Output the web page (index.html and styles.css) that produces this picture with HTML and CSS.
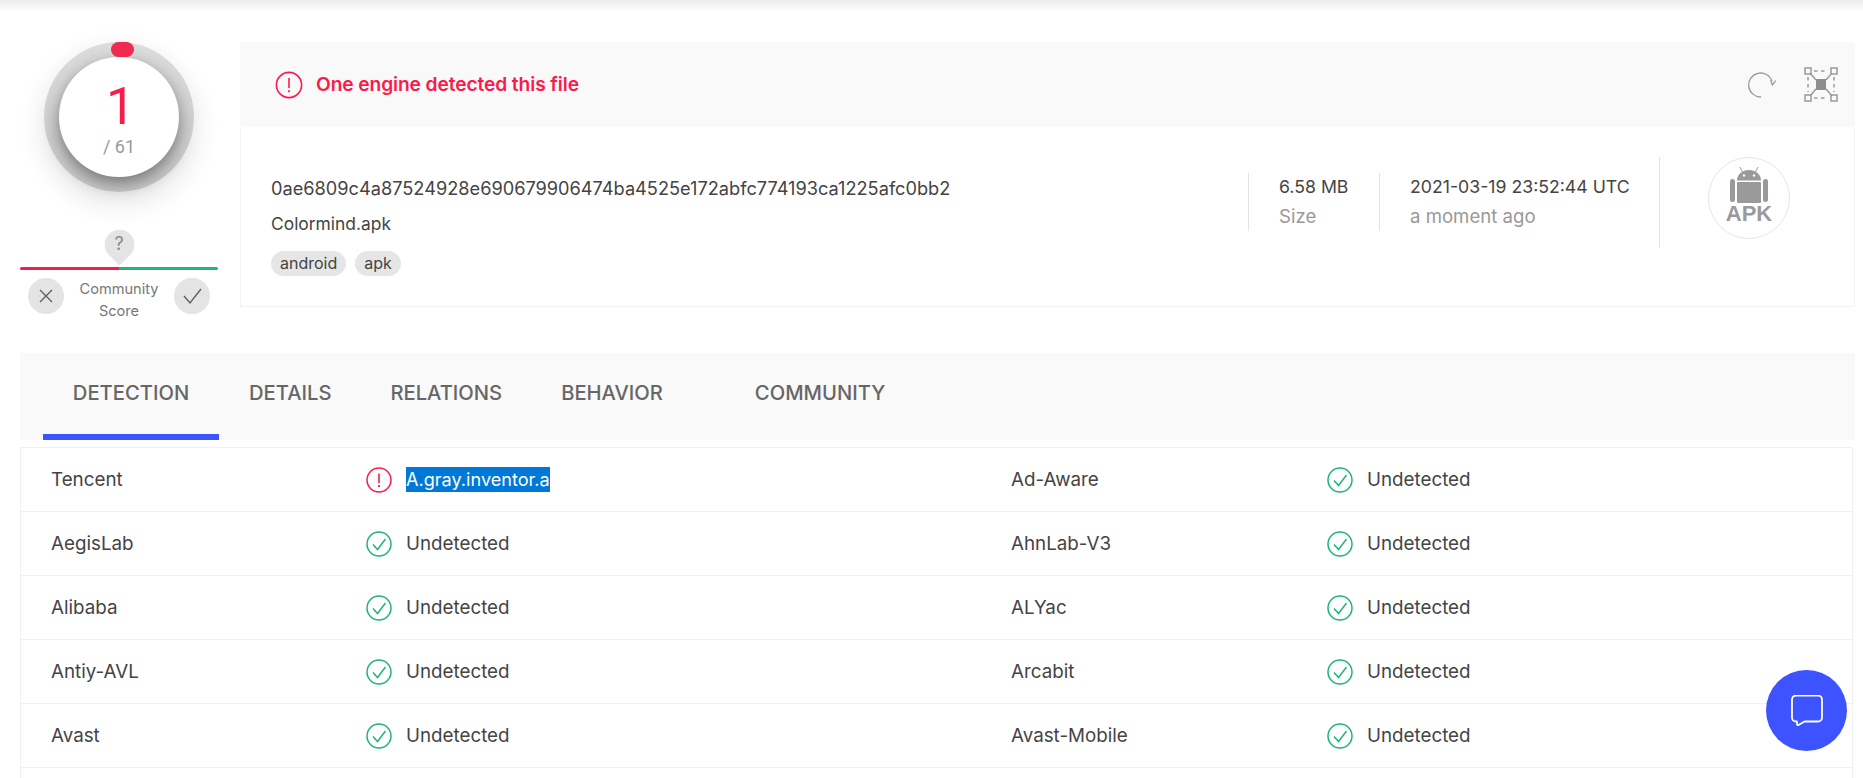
FILE: index.html
```html
<!DOCTYPE html>
<html lang="en">
<head>
<meta charset="utf-8">
<title>VirusTotal</title>
<link rel="stylesheet" href="styles.css">
</head>
<body>
<div class="top-shade"></div>
<main class="page">
  <section class="summary">
    <aside class="score">
      <div class="gauge">
        <div class="gauge-dot"></div>
        <div class="gauge-inner">
          <div class="gauge-num">1</div>
          <div class="gauge-total">/ 61</div>
        </div>
      </div>
      <div class="pin"><span class="pin-shape"></span><span class="pin-text">?</span></div>
      <div class="vote-line"></div>
      <div class="votes">
        <span class="vote"><svg width="18" height="18" viewBox="0 0 18 18"><path d="M3 3l12 12M15 3L3 15" fill="none" stroke="#5f5f5f" stroke-width="1.4"/></svg></span>
        <span class="vote-label">Community<br>Score</span>
        <span class="vote"><svg width="22" height="18" viewBox="0 0 22 18"><path d="M3 9l6 7L20 2" fill="none" stroke="#5f5f5f" stroke-width="1.4"/></svg></span>
      </div>
    </aside>
    <div class="card">
      <header class="card-head">
        <svg class="alert-big" width="28" height="28" viewBox="0 0 28 28"><circle cx="14" cy="14" r="12.6" fill="none" stroke="#fc1a4b" stroke-width="1.6"/><path d="M14 7v10" stroke="#fc1a4b" stroke-width="1.6"/><path d="M14 19.2v2" stroke="#fc1a4b" stroke-width="1.8"/></svg>
        <span class="head-text">One engine detected this file</span>
        <span class="head-actions">
          <svg width="31" height="26" viewBox="0 0 31 26"><path d="M15 25A12 12 0 1 1 26 9" fill="none" stroke="#9a9a9a" stroke-width="1.3"/><path d="M24.700 8l1.600 5 3.400-4.300" fill="none" stroke="#9a9a9a" stroke-width="1.3"/></svg>
          <svg width="34" height="35" viewBox="0 0 34 35"><g fill="none" stroke="#9a9a9a" stroke-width="1.500"><rect x="1" y="1" width="6" height="6"/><rect x="27" y="1" width="6" height="6"/><rect x="1" y="28" width="6" height="6"/><rect x="27" y="28" width="6" height="6"/><path d="M10 4h14M10 31h14M4 10v15M30 10v15" stroke-dasharray="3.500 3.500"/><path d="M6 6l6 7M28 6l-6 7M6 29l6-7M28 29l-6-7"/></g><rect x="12" y="12" width="10" height="11" fill="#8e8e8e"/></svg>
        </span>
      </header>
      <div class="card-body">
        <div class="file">
          <div class="hash">0ae6809c4a87524928e690679906474ba4525e172abfc774193ca1225afc0bb2</div>
          <div class="name">Colormind.apk</div>
          <div class="tags"><span class="tag">android</span><span class="tag">apk</span></div>
        </div>
        <div class="stat stat-size"><div class="stat-main">6.58 MB</div><div class="stat-sub">Size</div></div>
        <div class="stat stat-date"><div class="stat-main">2021-03-19 23:52:44 UTC</div><div class="stat-sub">a moment ago</div></div>
        <div class="type">
          <div class="type-circle">
            <svg width="38" height="36" viewBox="0 0 38 36"><g fill="#9a9a9a"><rect x="0" y="12" width="5" height="23" rx="2.500"/><rect x="33" y="12" width="5" height="23" rx="2.500"/><rect x="7" y="15" width="24" height="21" rx="1"/><path d="M7 13.500a12 10.500 0 0 1 24 0z"/></g><path d="M10 0l2.500 5M28 0l-2.500 5" stroke="#9a9a9a" stroke-width="1"/><circle cx="14" cy="8.500" r="1.200" fill="#fff"/><circle cx="24" cy="8.500" r="1.200" fill="#fff"/></svg>
            <span class="type-text">APK</span>
          </div>
        </div>
      </div>
    </div>
  </section>

  <nav class="tabs">
    <span class="tab tab-active">DETECTION</span>
    <span class="tab tab-details">DETAILS</span>
    <span class="tab tab-relations">RELATIONS</span>
    <span class="tab tab-behavior">BEHAVIOR</span>
    <span class="tab tab-community">COMMUNITY</span>
  </nav>

  <section class="table">
    <div class="row">
      <span class="engine">Tencent</span>
      <span class="result"><svg class="ic" viewBox="0 0 26 26"><circle cx="13" cy="13" r="12" fill="none" stroke="#fc1a4b" stroke-width="1.500"/><path d="M13 6.500v9.500" stroke="#fc1a4b" stroke-width="1.600"/><path d="M13 18v2" stroke="#fc1a4b" stroke-width="1.800"/></svg><span class="selected">A.gray.inventor.a</span></span>
      <span class="engine">Ad-Aware</span>
      <span class="result"><svg class="ic" viewBox="0 0 26 26"><circle cx="13" cy="13" r="12" fill="none" stroke="#1fb574" stroke-width="1.500"/><path d="M7 13.500l4.500 5L19.500 8" fill="none" stroke="#1fb574" stroke-width="1.500"/></svg>Undetected</span>
    </div>
    <div class="row">
      <span class="engine">AegisLab</span>
      <span class="result"><svg class="ic" viewBox="0 0 26 26"><circle cx="13" cy="13" r="12" fill="none" stroke="#1fb574" stroke-width="1.500"/><path d="M7 13.500l4.500 5L19.500 8" fill="none" stroke="#1fb574" stroke-width="1.500"/></svg>Undetected</span>
      <span class="engine">AhnLab-V3</span>
      <span class="result"><svg class="ic" viewBox="0 0 26 26"><circle cx="13" cy="13" r="12" fill="none" stroke="#1fb574" stroke-width="1.500"/><path d="M7 13.500l4.500 5L19.500 8" fill="none" stroke="#1fb574" stroke-width="1.500"/></svg>Undetected</span>
    </div>
    <div class="row">
      <span class="engine">Alibaba</span>
      <span class="result"><svg class="ic" viewBox="0 0 26 26"><circle cx="13" cy="13" r="12" fill="none" stroke="#1fb574" stroke-width="1.500"/><path d="M7 13.500l4.500 5L19.500 8" fill="none" stroke="#1fb574" stroke-width="1.500"/></svg>Undetected</span>
      <span class="engine">ALYac</span>
      <span class="result"><svg class="ic" viewBox="0 0 26 26"><circle cx="13" cy="13" r="12" fill="none" stroke="#1fb574" stroke-width="1.500"/><path d="M7 13.500l4.500 5L19.500 8" fill="none" stroke="#1fb574" stroke-width="1.500"/></svg>Undetected</span>
    </div>
    <div class="row">
      <span class="engine">Antiy-AVL</span>
      <span class="result"><svg class="ic" viewBox="0 0 26 26"><circle cx="13" cy="13" r="12" fill="none" stroke="#1fb574" stroke-width="1.500"/><path d="M7 13.500l4.500 5L19.500 8" fill="none" stroke="#1fb574" stroke-width="1.500"/></svg>Undetected</span>
      <span class="engine">Arcabit</span>
      <span class="result"><svg class="ic" viewBox="0 0 26 26"><circle cx="13" cy="13" r="12" fill="none" stroke="#1fb574" stroke-width="1.500"/><path d="M7 13.500l4.500 5L19.500 8" fill="none" stroke="#1fb574" stroke-width="1.500"/></svg>Undetected</span>
    </div>
    <div class="row">
      <span class="engine">Avast</span>
      <span class="result"><svg class="ic" viewBox="0 0 26 26"><circle cx="13" cy="13" r="12" fill="none" stroke="#1fb574" stroke-width="1.500"/><path d="M7 13.500l4.500 5L19.500 8" fill="none" stroke="#1fb574" stroke-width="1.500"/></svg>Undetected</span>
      <span class="engine">Avast-Mobile</span>
      <span class="result"><svg class="ic" viewBox="0 0 26 26"><circle cx="13" cy="13" r="12" fill="none" stroke="#1fb574" stroke-width="1.500"/><path d="M7 13.500l4.500 5L19.500 8" fill="none" stroke="#1fb574" stroke-width="1.500"/></svg>Undetected</span>
    </div>
    <div class="row row-empty"></div>
  </section>
</main>
<button class="chat" aria-label="Chat"><svg width="32" height="31" viewBox="1 1 32 31"><path d="M6 1.500h22a4 4 0 0 1 4 4v18a4 4 0 0 1-4 4H14.500l-6 3.500c-.8.4-1.500 0-1.500-.8V27.500H6a4 4 0 0 1-4-4v-18a4 4 0 0 1 4-4z" fill="none" stroke="#fff" stroke-width="1.800" stroke-linejoin="round"/></svg></button>
</body>
</html>
```
FILE: styles.css
```css
* { box-sizing: border-box; }
html, body { margin: 0; height: 100%; overflow: hidden; background: #fff; }
body { font-family: "Inter", "Roboto", sans-serif; color: #444; font-size: 17px; }

.top-shade { height: 12px; background: linear-gradient(#ececec, #fff); }
.page { padding: 30px 8px 0 20px; }

.summary { display: flex; height: 265px; }
.score { width: 198px; margin-right: 22px; display: flex; flex-direction: column; align-items: center; flex: none; }
.gauge { position: relative; width: 150px; height: 150px; flex: none; border-radius: 50%;
  background: linear-gradient(#dcdcdc, #c6c6c6);
  box-shadow: 0 10px 28px rgba(0,0,0,.12);
  display: flex; align-items: center; justify-content: center; }
.gauge-dot { position: absolute; left: 67px; top: 0; width: 23px; height: 15px; border-radius: 8px; background: #ee2a50; z-index: 2; }
.gauge-inner { width: 120px; height: 120px; border-radius: 50%; background: #fff; box-shadow: 0 6px 16px rgba(0,0,0,.42);
  display: flex; flex-direction: column; align-items: center; }
.gauge-num { font-family: "Roboto", sans-serif; font-size: 52px; line-height: 60px; margin-top: 20px; padding-left: 3px; color: #fc1a4b; }
.gauge-total { font-family: "Roboto", sans-serif; font-size: 18px; line-height: 22px; margin-top: -1px; color: #999; }
.pin { position: relative; width: 31px; height: 35px; flex: none; margin-top: 38px; }
.pin-shape { position: absolute; left: 2px; top: 1px; width: 27px; height: 27px; background: #e4e4e4; border-radius: 50% 50% 0 50%; transform: rotate(45deg) scale(1.1); }
.pin-text { position: absolute; left: 0; right: 0; top: 4px; text-align: center; font-size: 18px; line-height: 20px; color: #888; }
.vote-line { width: 198px; height: 3px; margin-top: 2px; border-radius: 2px; background: linear-gradient(90deg, #fc1a4b 50%, #22b573 50%); flex: none; }
.votes { display: flex; align-items: flex-start; justify-content: space-between; width: 182px; margin-top: 8px; flex: none; }
.vote { width: 36px; height: 36px; border-radius: 50%; background: #e4e4e4; display: flex; align-items: center; justify-content: center; }
.vote-label { font-size: 14.6px; line-height: 22px; text-align: center; color: #777; }

.card { flex: 1; height: 265px; border: 1px solid #f2f2f2; border-top: 0; }
.card-head { height: 85px; margin: 0 -1px; background: #f9f9f9; display: flex; align-items: center; padding-left: 35px; }
.head-text { margin-left: 13px; margin-bottom: 1px; font-size: 19.2px; font-weight: 600; color: #fc1a4b; letter-spacing: -.1px; }
.head-actions { margin-left: auto; margin-right: 17px; display: flex; align-items: center; gap: 27px; }
.card-body { display: flex; height: 180px; padding-left: 30px; }
.file { width: 977px; padding-top: 50px; flex: none; }
.hash { font-size: 18.2px; line-height: 22px; }
.name { margin-top: 14px; font-size: 17.4px; line-height: 22px; }
.tags { display: flex; gap: 9px; margin-top: 16px; }
.tag { height: 25px; padding: 0 9px; border-radius: 13px; background: #e6e6e6; font-size: 16px; line-height: 25px; color: #444; }
.stat { margin-top: 46px; height: 58px; padding-left: 30px; border-left: 1px solid #e4e4e4; flex: none; }
.stat-size { width: 131px; }
.stat-date { width: 280px; }
.stat-main { font-size: 17.7px; line-height: 28px; }
.stat-sub { font-size: 18.6px; line-height: 30px; color: #999; }
.type { margin-top: 30px; height: 91px; flex: 1; border-left: 1px solid #e4e4e4; padding-left: 48px; }
.type-circle { width: 82px; height: 82px; border: 1px solid #e6e6e6; border-radius: 50%; display: flex; flex-direction: column; align-items: center; padding-top: 9px; }
.type-text { font-family: "Liberation Sans", sans-serif; font-size: 22px; font-weight: 700; line-height: 18px; color: #9a9a9a; margin-top: 2px; }

.tabs { display: flex; height: 87px; margin-top: 46px; background: #f9f9f9; }
.tab { font-size: 20.2px; font-weight: 500; color: #666; line-height: 79px; height: 87px; }
.tab-active { margin-left: 23px; width: 176px; text-align: center; border-bottom: 6px solid #3d53ff; }
.tab-details { margin-left: 30px; }
.tab-relations { margin-left: 59px; }
.tab-behavior { margin-left: 59px; }
.tab-community { margin-left: 92px; }

.table { margin-top: 7px; margin-right: 2px; border: 1px solid #f0f0f0; }
.row { display: grid; grid-template-columns: 315px 645px 316px 1fr; height: 64px; align-items: center; padding-left: 30px; border-bottom: 1px solid #f0f0f0; }
.row-empty { height: 64px; }
.engine, .result { font-size: 18.8px; display: flex; align-items: center; }
.ic { width: 26px; height: 26px; margin-right: 14px; flex: none; }
.selected { background: #0078d7; color: #fff; font-size: 18.1px; line-height: 25px; }

.chat { position: fixed; left: 1766px; top: 670px; width: 81px; height: 81px; border: 0; padding: 0; border-radius: 50%; background: #3d53ff; display: flex; align-items: center; justify-content: center; }
```
